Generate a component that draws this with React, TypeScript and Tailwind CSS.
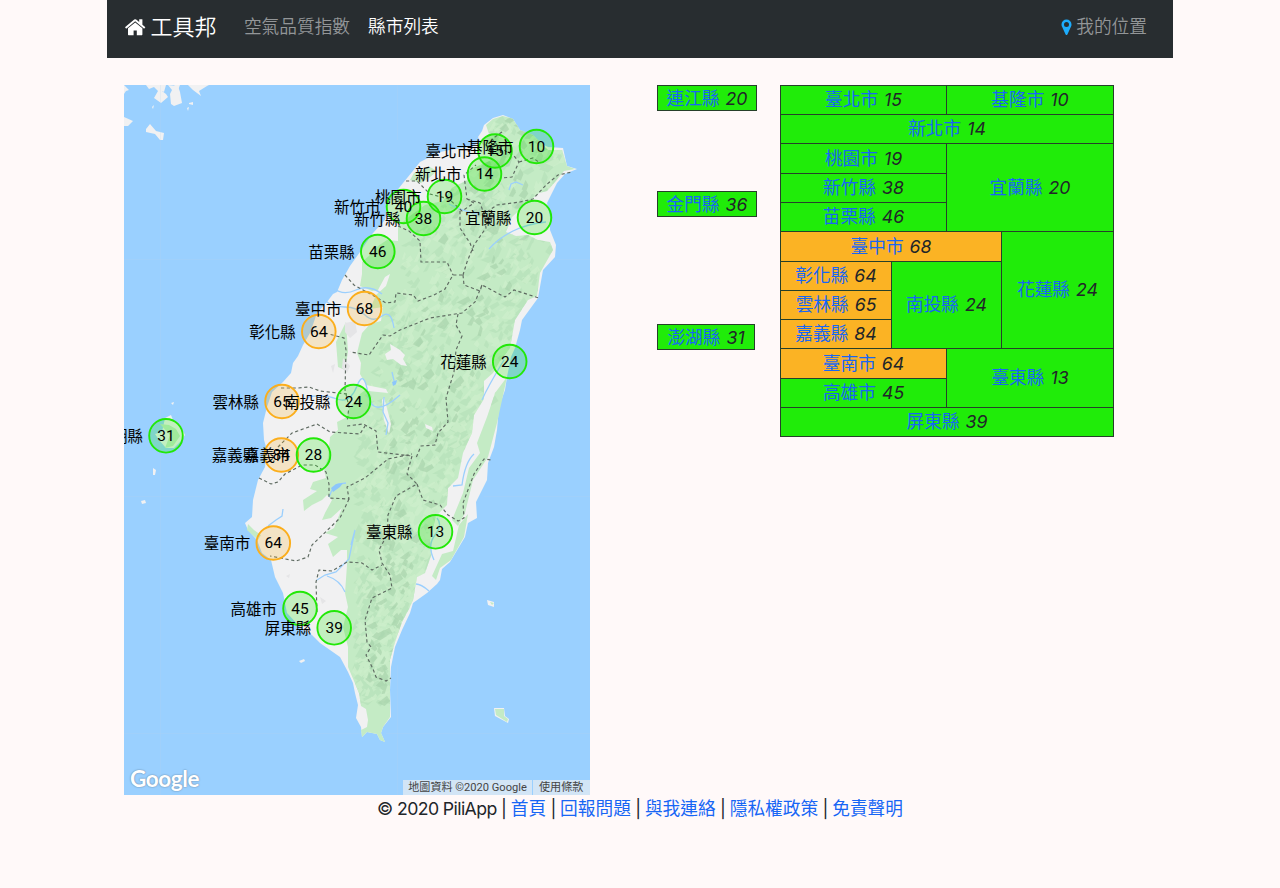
import React from 'react';

type Marker = { name: string; value: number; x: number; y: number; warn?: boolean };

const markers: Marker[] = [
  { name: '臺北市', value: 15, x: 495, y: 151 },
  { name: '基隆市', value: 10, x: 536.5, y: 146.5 },
  { name: '新北市', value: 14, x: 484.5, y: 174 },
  { name: '新竹市', value: 40, x: 403.5, y: 206.5 },
  { name: '桃園市', value: 19, x: 444.5, y: 196.5 },
  { name: '新竹縣', value: 38, x: 423.5, y: 218.5 },
  { name: '宜蘭縣', value: 20, x: 534.5, y: 217.5 },
  { name: '苗栗縣', value: 46, x: 377.8, y: 251.5 },
  { name: '臺中市', value: 68, x: 364.5, y: 308.5, warn: true },
  { name: '彰化縣', value: 64, x: 318.8, y: 331.5, warn: true },
  { name: '花蓮縣', value: 24, x: 509.7, y: 361.5 },
  { name: '雲林縣', value: 65, x: 282, y: 401.5, warn: true },
  { name: '南投縣', value: 24, x: 353.5, y: 401.5 },
  { name: '澎湖縣', value: 31, x: 166, y: 435.8 },
  { name: '嘉義縣', value: 84, x: 281.3, y: 455, warn: true },
  { name: '嘉義市', value: 28, x: 313.5, y: 455 },
  { name: '臺東縣', value: 13, x: 435.5, y: 531.8 },
  { name: '臺南市', value: 64, x: 273.3, y: 543, warn: true },
  { name: '高雄市', value: 45, x: 300, y: 608.5 },
  { name: '屏東縣', value: 39, x: 334.2, y: 627.8 },
];

type Cell = { name: string; value: number; area: string; warn?: boolean };

const cells: Cell[] = [
  { name: '臺北市', value: 15, area: 'col-span-3' },
  { name: '基隆市', value: 10, area: 'col-span-3' },
  { name: '新北市', value: 14, area: 'col-span-6' },
  { name: '桃園市', value: 19, area: 'col-span-3' },
  { name: '宜蘭縣', value: 20, area: 'col-span-3 row-span-3' },
  { name: '新竹縣', value: 38, area: 'col-span-3' },
  { name: '苗栗縣', value: 46, area: 'col-span-3' },
  { name: '臺中市', value: 68, area: 'col-span-4', warn: true },
  { name: '花蓮縣', value: 24, area: 'col-span-2 row-span-4' },
  { name: '彰化縣', value: 64, area: 'col-span-2', warn: true },
  { name: '南投縣', value: 24, area: 'col-span-2 row-span-3' },
  { name: '雲林縣', value: 65, area: 'col-span-2', warn: true },
  { name: '嘉義縣', value: 84, area: 'col-span-2', warn: true },
  { name: '臺南市', value: 64, area: 'col-span-3', warn: true },
  { name: '臺東縣', value: 13, area: 'col-span-3 row-span-2' },
  { name: '高雄市', value: 45, area: 'col-span-3' },
  { name: '屏東縣', value: 39, area: 'col-span-6' },
];

const coast =
  'M503 115L493 118 484 125 482 131 478 137 480 141 472 147 462 148 450 150 440 152 430 157 420 162 412 172 403 183 395 193 388 205 385 220 373 233 366 243 360 252 350 266 342 280 337 292 333 294 327 302 317 313 310 333 303 345 298 356 293 363 291 373 283 382 272 392 267 407 263 423 264 440 267 450 265 467 258 480 253 500 252 517 245 523 248 530 257 540 262 553 271 560 275 577 283 593 287 613 300 627 312 635 320 643 330 650 340 657 348 672 353 683 355 693 358 705 356 718 361 727 362 737 367 732 377 734 380 740 385 742 381 733 383 727 391 717 390 690 391 667 395 647 402 630 410 613 413 603 427 593 437 584 440 580 442 569 450 562 465 537 468 523 477 518 476 502 487 480 488 463 494 447 497 430 499 407 505 390 507 377 511 357 515 348 520 330 522 320 538 298 543 270 555 257 556 245 550 230 550 217 547 203 557 183 565 174 577 169 567 166 563 148 548 147 540 143 533 135 520 130 513 119Z';

const forest =
  'M503 116L493 119 486 125 489 134 481 142 487 150 492 160 478 166 468 171 467 180 452 188 443 201 425 205 410 216 398 226 398 241 387 240 378 246 371 254 362 262 362 274 360 286 372 291 378 290 385 277 390 274 386 286 376 295 370 309 383 307 381 321 370 324 362 333 357 353 361 363 360 374 368 388 360 394 349 409 347 417 337 422 338 430 330 437 328 458 324 470 326 478 313 482 310 489 317 491 303 500 304 511 312 505 322 500 327 495 332 500 325 513 322 520 331 518 342 508 334 528 325 533 338 537 328 544 333 557 341 550 347 550 347 565 345 593 348 607 343 627 348 647 348 667 354 681 359 693 361 706 366 709 368 720 367 727 361 730 362 737 367 732 377 734 380 740 385 742 381 733 383 727 390 717 390 660 395 642 402 622 409 609 413 600 417 577 425 573 432 553 430 540 436 516 447 505 448 488 458 478 463 453 472 433 474 415 484 399 484 381 493 373 500 361 510 348 515 320 528 300 537 296 540 273 553 250 550 242 538 240 528 235 516 236 506 232 512 217 525 205 539 193 547 191 555 182 564 171 575 169 567 166 562 150 548 150 533 135 520 130 513 119Z M507 377L495 393 487 417 477 443 480 453 469 468 463 493 452 520 458 526 465 513 473 480 488 457 497 423 504 391Z M468 514L459 525 453 551 442 554 432 576 436 580 440 568 451 560 464 537Z M346 322L336 342 338 367 345 370 348 352Z M414 173L430 167 437 171 429 178 421 183 410 180Z';

const rivers = [
  'M324 300Q333 307 345 307T365 315T382 316T394 328',
  'M333 288Q343 296 356 290T382 294',
  'M308 397Q324 394 337 399T357 386T368 394T400 395',
  'M384 397L383 412 388 423 386 435',
  'M329 497L332 490 338 484 346 483',
  'M268 526L276 520 282 516 283 509',
  'M317 580L325 575 336 572 349 559 355 530 351 545',
  'M327 576Q340 580 345 592',
  'M429 591Q421 584 416 584',
  'M489 249Q499 238 513 231T546 222',
  'M509 190L511 184 516 182 523 185',
  'M449 204Q462 211 478 214',
  'M504 360Q495 375 490 384T482 400',
  'M474 454Q465 462 462 485L453 486',
  'M437 518Q443 525 435 535T434 560',
  'M392 372L395 385',
];

const borders = [
  'M502 132L492 139 500 148 514 156 519 162 512 177 502 178 M519 162L533 158 540 163 M406 181L417 181 430 194 449 199 462 211 474 203 467 199 464 175 476 165',
  'M467 199L480 203 484 214 497 205 520 202 533 199 546 185 558 175 572 172',
  'M484 214L486 228 474 245 467 262 463 275 M460 211L460 228 470 243 473 251 M398 226L409 231 420 241 421 262 447 262 453 275 M463 275L464 285 480 291 482 285 505 297 514 290 539 298',
  'M345 275L354 285 374 296 386 303 395 302 396 293 413 295 418 301 434 295 445 289 453 275 463 275 M482 285L475 302 462 313 430 318 400 330 390 336 383 335 369 355 350 352 M458 314L456 325 462 336 456 350 454 372 446 398 448 422 438 433 435 445 421 446 416 458 M325 333L344 338 346 350 345 390 349 407 347 422 M347 426L363 424 376 431 378 452 412 456',
  'M281 388L298 388 309 387 320 391 347 394 M278 447L292 433 317 424 330 432 360 434 365 426 M259 478L271 484 278 482 285 474 302 465 315 465 326 472 329 484 329 498 349 499 347 487 365 478 388 459 412 454',
  'M349 499L340 518 312 545 308 557 296 561 270 556 M412 456L407 474 417 484 396 496 388 515 387 535 379 550 382 563 390 575 392 588 372 598 365 620 367 642 371 647 366 655 373 669 376 677 386 681 391 678 M317 612L316 582 319 570 332 571 347 562 362 563 372 570 382 565 M417 484L423 500 440 505 448 515 458 521 464 518 463 503 474 474 484 459 492 460',
];

// Soft slanted facets that give the forest its relief shading.
function buildFacets() {
  let seed = 4711;
  const rnd = () => {
    seed = (seed * 16807) % 2147483647;
    return seed / 2147483647;
  };
  const dark: string[] = [];
  const deep: string[] = [];
  const light: string[] = [];
  for (let i = 0; i < 1500; i++) {
    const y = 118 + rnd() * 585;
    const west = y < 250 ? 490 - (y - 118) * 0.7 : y < 450 ? 400 - (y - 250) * 0.25 : 352;
    const east = y < 300 ? 565 - (y - 118) * 0.12 : y < 480 ? 527 - (y - 300) * 0.42 : 450 - (y - 480) * 0.28;
    const x = west + rnd() * (east - west);
    const l = 5 + rnd() * 9;
    const w = 2 + rnd() * 4;
    const a = -0.85 + (rnd() - 0.5) * 0.9;
    const ux = Math.cos(a) * l;
    const uy = Math.sin(a) * l;
    const p = `M${x.toFixed(1)} ${y.toFixed(1)}l${ux.toFixed(1)} ${uy.toFixed(1)}l${(w * 0.6).toFixed(1)} ${w.toFixed(1)}l${(-ux * 0.6).toFixed(1)} ${(-uy * 0.7).toFixed(1)}Z`;
    const core = Math.abs((x - west) / (east - west) - 0.5) < 0.3;
    if (i % 5 < 2) dark.push(p);
    else if (i % 5 === 2) (core ? deep : dark).push(p);
    else light.push(p);
  }
  return { dark: dark.join(''), deep: deep.join(''), light: light.join('') };
}

const facets = buildFacets();

function MapTerrain() {
  return (
    <svg className="block h-full w-full" viewBox="124 85 466 710" preserveAspectRatio="none">
      <defs>
        <clipPath id="forest-clip">
          <path d={forest} />
        </clipPath>
      </defs>
      <g fill="#f1f1f2">
        <path d="M124 85L129 90 126 91 124 94Z M146 85L149 89 154 87 158 91 154 98 161 103 168 97 166 94 162 91 165 85Z M168 85L172 90 170 94 171 104 174 106 182 103 180 92 178 86Z M188 85L193 90 201 96 199 91 207 86 209 85Z M189 103L193 102 193 105 189 104Z M152 107L154 105 153 109Z M187 108L189 107 188 111Z M124 117L133 121 128 126 124 126Z M150 124L146 129 146 132 155 134 160 140 163 140 164 133 156 131Z" />
        <path d="M160 85L166 85 164 92 160 90Z M174 85L180 85 178 90Z" />
        <path d="M165 418L171 415 173 420 180 425 185 435 181 441 174 448 166 448 159 440 155 434 162 432Z M171 403L174 402 173 405Z M153 468L156 470 155 475 153 475Z M141 501L145 500 146 503 142 504Z M299 661L304 659 305 661 301 663Z M487 600L494 602 494 607 488 605Z M494 708L504 708 505 716 509 719 508 723 495 716Z" />
      </g>
      <path d={coast} fill="#f1f1f2" />
      <path d={forest} fill="#c4ebc5" />
      <path d="M160 424L169 425 176 429 180 436 173 446 165 448 170 435Z M495 709L504 709 504 716 508 719 507 722 496 715Z M490 602L494 603 492 605Z M248 524L254 530 261 535 258 540 247 530Z" fill="#c4ebc5" />
      <g clipPath="url(#forest-clip)">
        <path d={facets.dark} fill="#b4dfb7" opacity="0.6" />
        <path d={facets.light} fill="#d0f0cd" opacity="0.65" />
        <path d={facets.deep} fill="#a5d0a9" opacity="0.6" />
      </g>
      <path
        d="M390 344L400 350 405 355 403 359 407 366 401 365 393 359 387 360 385 354 391 350Z M425 424L432 427 433 431 426 428Z M384 397L388 412 391 424 389 434 384 420 382 400Z M366 385L386 389 388 393 368 391Z"
        fill="#f1f1f2"
      />
      <path d="M345 323L355 321 357 332 350 338 345 332Z M331 366L335 364 333 373Z M320 597L326 601 322 604Z M286 576L290 574 289 578Z M343 358L350 366 347 373 342 368Z" fill="#e5e5e7" />
      <path d={rivers.join('')} fill="none" stroke="#9bcffd" strokeWidth="1.3" />
      <path d="M392 382L397 380 396 384 393 386Z M331 488L336 484 343 483 340 487 333 492Z" fill="#8cc6fb" />
      <path d={borders.join('')} fill="none" stroke="#5e6a61" strokeWidth="1.15" strokeDasharray="3.2 2.6" />
      <path d="M160.5 85V795 M397.5 85V140 M397.5 665V795 M124 259.5H350 M556 259.5H590 M124 496.500H252 M484 496.500H590 M124 733.500H360 M386 733.500H590" fill="none" stroke="#b8d3ee" strokeWidth="0.6" opacity="0.35" />
      {markers.map((m) => (
        <circle
          key={m.name}
          cx={m.x}
          cy={m.y}
          r="16.8"
          fill={m.warn ? '#fbb224' : '#22ea0a'}
          fillOpacity="0.22"
          stroke={m.warn ? '#fbae1c' : '#22e808'}
          strokeWidth="1.9"
        />
      ))}
    </svg>
  );
}

function CountyMap() {
  return (
    <div className="relative h-[710px] w-[466px] shrink-0 overflow-hidden bg-[#9ad0ff] font-[Roboto,'Noto_Sans_CJK_TC',sans-serif] text-black">
      <MapTerrain />
      {markers.map((m) => (
        <React.Fragment key={m.name}>
          <span
            className="absolute w-[60px] -translate-y-1/2 text-right text-[15.5px] leading-5 whitespace-nowrap"
            style={{ left: m.x - 124 - 83, top: m.y - 85 + 1 }}
          >
            {m.name}
          </span>
          <span
            className="absolute w-8 -translate-x-1/2 -translate-y-1/2 text-center text-[15.5px] leading-5"
            style={{ left: m.x - 124, top: m.y - 85 }}
          >
            {m.value}
          </span>
        </React.Fragment>
      ))}
      <div className="absolute bottom-px left-[6px] font-[Lato,sans-serif] text-[22.5px] leading-[30px] font-bold tracking-[-0.4px] text-white [text-shadow:0_0_2px_#6f93b3,0_0_1px_#6f93b3]">
        Google
      </div>
      <div className="absolute right-0 bottom-0 flex h-[15px] gap-px text-[11.1px] leading-[15px] text-[#444]">
        <span className="w-[129px] bg-[#d2e5f6] text-center whitespace-nowrap">地圖資料 ©2020 Google</span>
        <span className="w-[57px] bg-[#d2e5f6] pl-1.5 whitespace-nowrap">使用條款</span>
      </div>
    </div>
  );
}

function Entry({ name, value }: { name: string; value: number }) {
  return (
    <span className="whitespace-nowrap">
      <a className="text-[#1766f5]">{name}</a> <i className="ml-px">{value}</i>
    </span>
  );
}

function Islands() {
  const box = 'flex h-[26px] items-center justify-center border border-[#26402a] bg-[#20ec09] pt-[2px]';
  return (
    <div className="flex w-[123px] shrink-0 flex-col items-start">
      <div className={`${box} w-[100px]`}>
        <Entry name="連江縣" value={20} />
      </div>
      <div className={`${box} mt-[80px] w-[100px]`}>
        <Entry name="金門縣" value={36} />
      </div>
      <div className={`${box} mt-[107px] w-[98px]`}>
        <Entry name="澎湖縣" value={31} />
      </div>
    </div>
  );
}

function CountyGrid() {
  return (
    <div className="grid w-[334px] shrink-0 grid-cols-[55px_56px_55px_55px_56px_56px] grid-rows-[29px_29px_30px_29px_29px_30px_29px_29px_29px_30px_29px_29px] border-t border-l border-[#26402a]">
      {cells.map((c) => (
        <div
          key={c.name}
          className={`${c.area} flex min-w-0 items-center justify-center border-r border-b border-[#26402a] pt-px ${c.warn ? 'bg-[#fbb324]' : 'bg-[#20ec09]'}`}
        >
          <Entry name={c.name} value={c.value} />
        </div>
      ))}
    </div>
  );
}

const footerLinks = ['首頁', '回報問題', '與我連絡', '隱私權政策', '免責聲明'];

export default function App() {
  return (
    <div className="h-[888px] overflow-hidden bg-[#fff9f9] font-[Inter,'Noto_Sans_CJK_TC',sans-serif] text-[17.7px] leading-[26.600px] text-[#212529]">
      <nav className="mx-auto flex h-[58px] w-[1066px] items-center bg-[#282d30] pr-[26px] pb-[3px] pl-[17px] font-[350]">
        <a className="flex items-center text-[22px] text-white">
          <svg className="mr-[4px] h-[22.400px] w-[22.400px]" viewBox="0 0 1792 1792" fill="currentColor">
            <path d="M1472 992v480q0 26-19 45t-45 19h-384v-384h-256v384h-384q-26 0-45-19t-19-45v-480q0-1 .5-3t.5-3l575-474 575 474q1 2 1 6zm223-69l-62 74q-8 9-21 11h-3q-13 0-21-7l-692-577-692 577q-12 8-24 7-13-2-21-11l-62-74q-8-10-7-23.500t11-21.500l719-599q32-26 76-26t76 26l244 204v-195q0-14 9-23t23-9h192q14 0 23 9t9 23v408l219 182q10 8 11 21.500t-7 23.500z" />
          </svg>
          工具邦
        </a>
        <a className="ml-[27.500px] text-[#939698]">空氣品質指數</a>
        <a className="ml-[18px] text-white">縣市列表</a>
        <a className="ml-auto flex items-center text-[#939698]">
          <svg className="mr-1 h-[17px] w-[11px]" viewBox="0 0 11 17">
            <path fillRule="evenodd" fill="#1dacfc" d="M5.500 .5A5 5 0 0 0 .5 5.500C.5 6.700 .8 7.300 1.200 8.100L4.600 15.400Q5.500 16.700 6.400 15.400L9.800 8.100C10.200 7.300 10.500 6.700 10.500 5.500A5 5 0 0 0 5.500 .5ZM5.500 3A2.500 2.500 0 1 1 5.500 8A2.500 2.500 0 0 1 5.500 3Z" />
          </svg>
          我的位置
        </a>
      </nav>
      <main className="mx-auto flex w-[1066px] items-start pt-[27px] pl-[17px]">
        <CountyMap />
        <div className="flex items-start pl-[67px]">
          <Islands />
          <CountyGrid />
        </div>
      </main>
      <footer className="pt-px text-center tracking-[-0.600px]">
        © 2020 PiliApp
        {footerLinks.map((t) => (
          <React.Fragment key={t}>
            {' | '}
            <a className="tracking-normal text-[#1766f5]">{t}</a>
          </React.Fragment>
        ))}
      </footer>
    </div>
  );
}
